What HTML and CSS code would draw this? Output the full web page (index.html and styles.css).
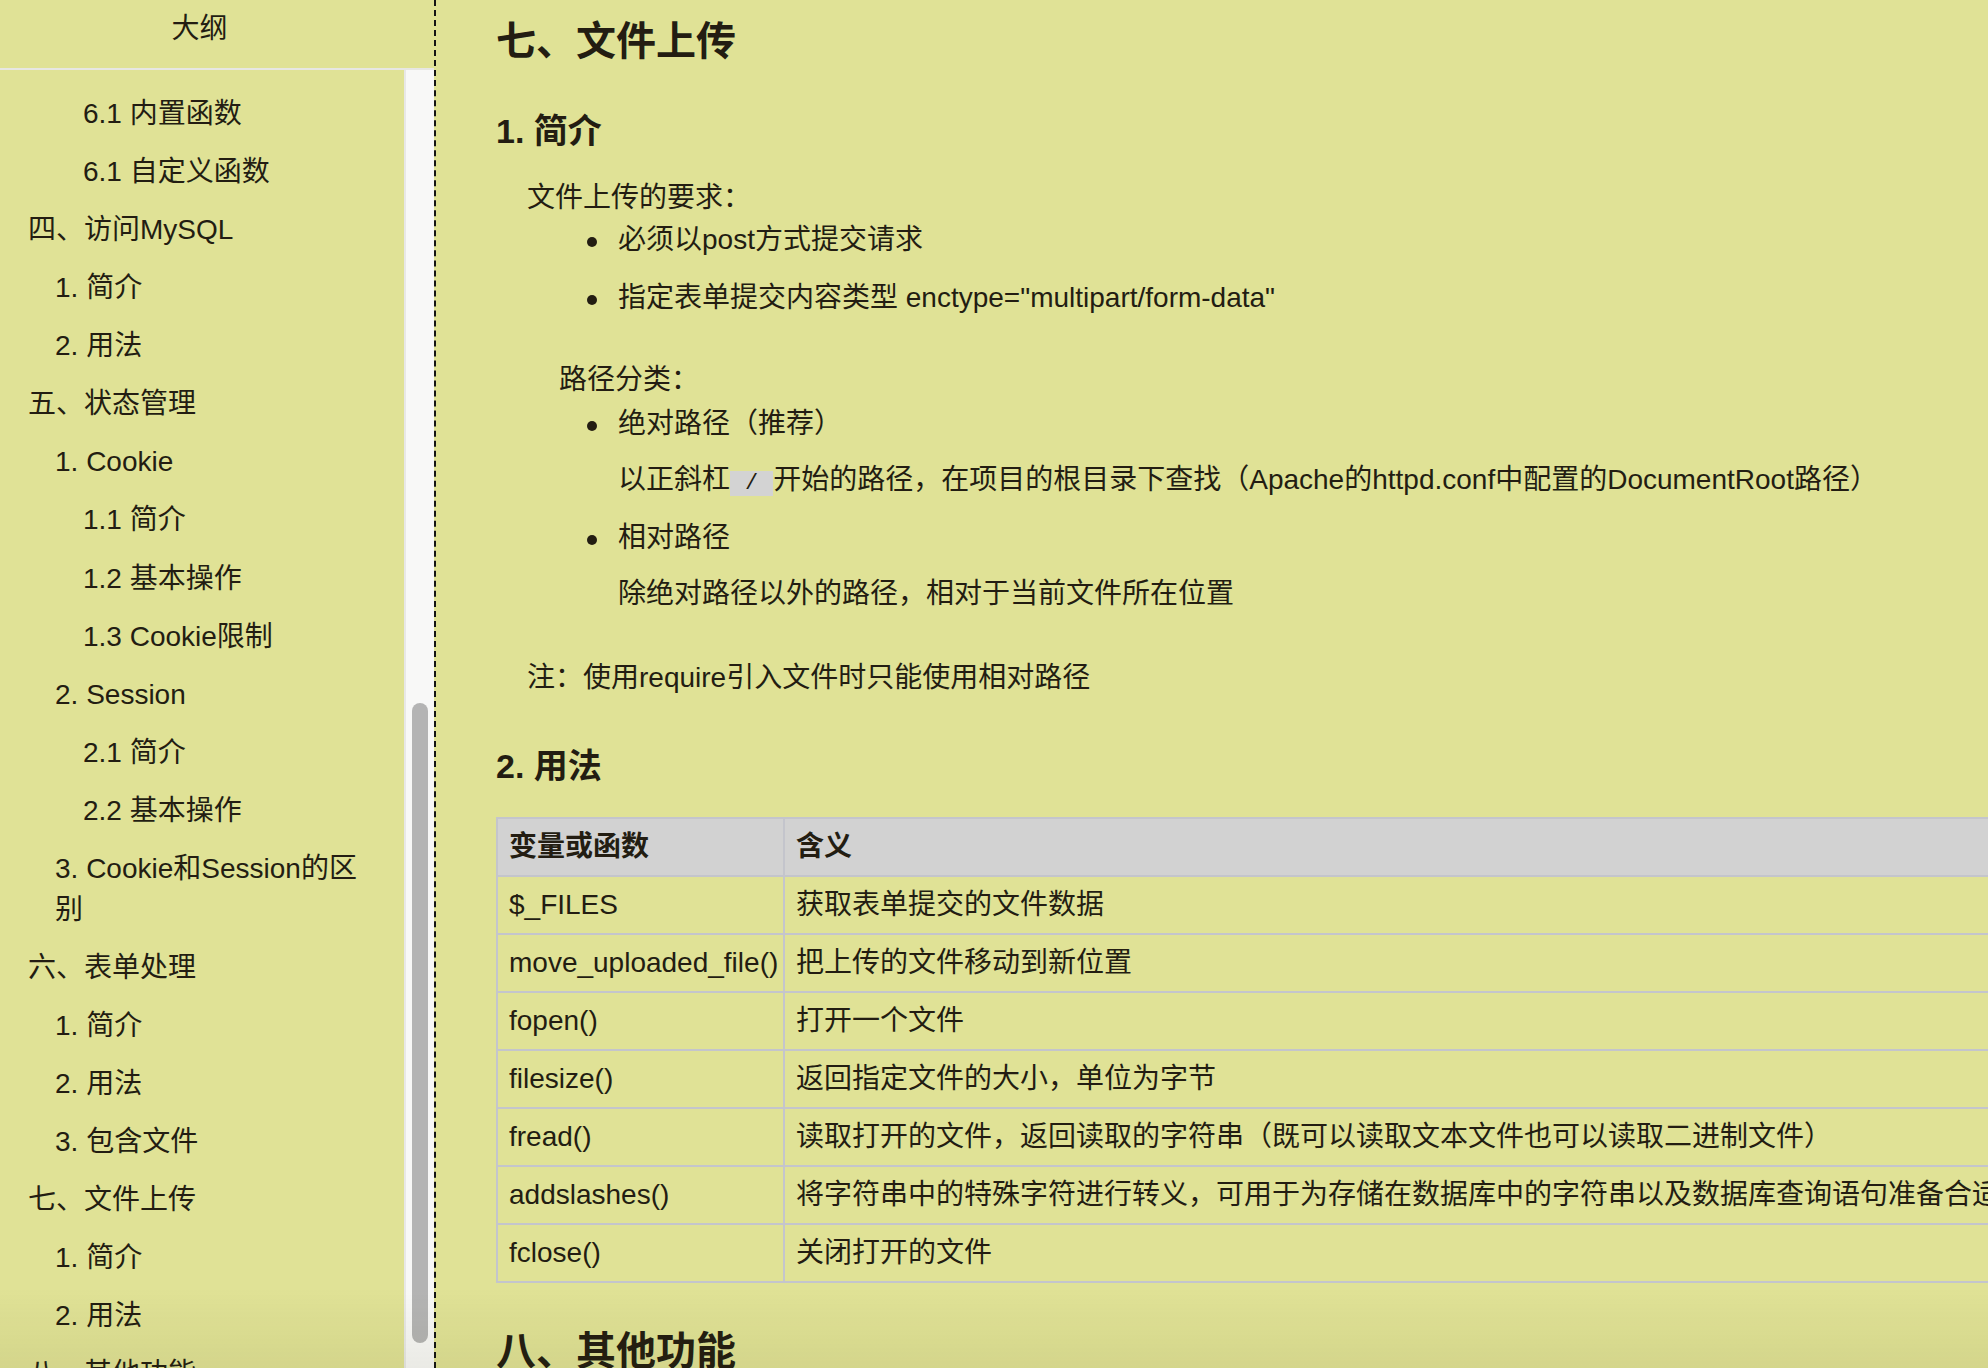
FILE: index.html
```html
<!DOCTYPE html>
<html lang="zh-CN">
<head>
<meta charset="utf-8">
<title>文件上传</title>
<link rel="stylesheet" href="styles.css">
</head>
<body>
<div class="app">
  <aside class="sidebar">
    <div class="outline-title">大纲</div>
    <div class="outline-body">
      <ul class="outline-list">
        <li class="outline-item lv3">6.1 内置函数</li>
        <li class="outline-item lv3">6.1 自定义函数</li>
        <li class="outline-item lv1">四、访问MySQL</li>
        <li class="outline-item lv2">1. 简介</li>
        <li class="outline-item lv2">2. 用法</li>
        <li class="outline-item lv1">五、状态管理</li>
        <li class="outline-item lv2">1. Cookie</li>
        <li class="outline-item lv3">1.1 简介</li>
        <li class="outline-item lv3">1.2 基本操作</li>
        <li class="outline-item lv3">1.3 Cookie限制</li>
        <li class="outline-item lv2">2. Session</li>
        <li class="outline-item lv3">2.1 简介</li>
        <li class="outline-item lv3">2.2 基本操作</li>
        <li class="outline-item lv2">3. Cookie和Session的区别</li>
        <li class="outline-item lv1">六、表单处理</li>
        <li class="outline-item lv2">1. 简介</li>
        <li class="outline-item lv2">2. 用法</li>
        <li class="outline-item lv2">3. 包含文件</li>
        <li class="outline-item lv1">七、文件上传</li>
        <li class="outline-item lv2">1. 简介</li>
        <li class="outline-item lv2">2. 用法</li>
        <li class="outline-item lv1">八、其他功能</li>
      </ul>
      <div class="scroll-track"><div class="scroll-thumb"></div></div>
    </div>
  </aside>
  <main class="doc">
    <h1 class="h1">七、文件上传</h1>
    <h2 class="h2">1. 简介</h2>
    <p class="lead">文件上传的要求：</p>
    <ul class="bullets">
      <li class="bullet">必须以post方式提交请求</li>
      <li class="bullet">指定表单提交内容类型 enctype="multipart/form-data"</li>
    </ul>
    <p class="lead lead-deep">路径分类：</p>
    <ul class="bullets bullets-paths">
      <li class="bullet">绝对路径（推荐）
        <p class="sub">以正斜杠<code class="code">/</code>开始的路径，在项目的根目录下查找（Apache的httpd.conf中配置的DocumentRoot路径）</p>
      </li>
      <li class="bullet">相对路径
        <p class="sub">除绝对路径以外的路径，相对于当前文件所在位置</p>
      </li>
    </ul>
    <p class="lead note">注：使用require引入文件时只能使用相对路径</p>
    <h2 class="h2 h2-usage">2. 用法</h2>
    <table class="table">
      <colgroup><col class="col-name"><col class="col-desc"></colgroup>
      <thead>
        <tr><th class="cell">变量或函数</th><th class="cell">含义</th></tr>
      </thead>
      <tbody>
        <tr><td class="cell">$_FILES</td><td class="cell">获取表单提交的文件数据</td></tr>
        <tr><td class="cell">move_uploaded_file()</td><td class="cell">把上传的文件移动到新位置</td></tr>
        <tr><td class="cell">fopen()</td><td class="cell">打开一个文件</td></tr>
        <tr><td class="cell">filesize()</td><td class="cell">返回指定文件的大小，单位为字节</td></tr>
        <tr><td class="cell">fread()</td><td class="cell">读取打开的文件，返回读取的字符串（既可以读取文本文件也可以读取二进制文件）</td></tr>
        <tr><td class="cell">addslashes()</td><td class="cell">将字符串中的特殊字符进行转义，可用于为存储在数据库中的字符串以及数据库查询语句准备合适的字符串</td></tr>
        <tr><td class="cell">fclose()</td><td class="cell">关闭打开的文件</td></tr>
      </tbody>
    </table>
    <h1 class="h1 h1-next">八、其他功能</h1>
  </main>
</div>
<div class="shade"></div>
</body>
</html>
```
FILE: styles.css
```css
* { box-sizing: border-box; }
html, body { margin: 0; padding: 0; }
body {
  background: #e0e296;
  color: #231d12;
  font-family: "Liberation Sans", "Noto Sans CJK SC", sans-serif;
  font-size: 28px;
  overflow: hidden;
  height: 1368px;
}
.app { display: flex; height: 1368px; overflow: hidden; }

/* sidebar */
.sidebar {
  width: 436px;
  flex: none;
  border-right: 2px dashed #141414;
  display: flex;
  flex-direction: column;
}
.outline-title {
  height: 70px;
  flex: none;
  border-bottom: 2px solid #e7e7e3;
  padding-right: 35px;
  text-align: center;
  line-height: 58px;
}
.outline-body { flex: 1; min-height: 0; display: flex; overflow: hidden; }
.outline-list {
  flex: 1;
  list-style: none;
  margin: 0;
  padding: 15px 32px 0 0;
}
.outline-item { line-height: 40.6px; padding: 8.75px 0; }
.lv1 { padding-left: 28px; }
.lv2 { padding-left: 55px; }
.lv3 { padding-left: 83px; }
.scroll-track {
  width: 30px;
  flex: none;
  background: #f8f8f7;
  border-left: 2px solid #e8e8e6;
  padding: 0 6px;
}
.scroll-thumb {
  margin-top: 633px;
  height: 640px;
  border-radius: 8px;
  background: #b4b4b4;
}

/* document */
.doc {
  flex: 1;
  min-width: 0;
  overflow: hidden;
  padding: 13px 0 0 60px;
}
.h1 { font-size: 40px; line-height: 56px; margin: 0; font-weight: 700; }
.h2 { font-size: 34px; line-height: 48px; margin: 38px 0 0; font-weight: 700; }
.lead { margin: 23px 0 0 31px; line-height: 40px; }
.lead-deep { margin-top: 42px; margin-left: 63px; }
.bullets { margin: 2px 0 0; padding-left: 122px; list-style: none; }
.bullets-paths { margin-top: 4px; }
.bullet { line-height: 40px; }
.bullet::before {
  content: "";
  display: inline-block;
  width: 10px;
  height: 10px;
  border-radius: 50%;
  background: currentColor;
  margin-left: -31px;
  margin-right: 21px;
  vertical-align: middle;
}
.bullet + .bullet { margin-top: 18px; }
.sub { margin: 16px 0 0; line-height: 40px; white-space: nowrap; }
.code {
  font-family: "Liberation Mono", monospace;
  font-size: 22px;
  line-height: 22px;
  background: #d3d3d3;
  padding: 0 15px;
}
.note { margin-top: 44px; }
.h2-usage { margin-top: 44px; }

.table {
  margin-top: 27px;
  border-collapse: collapse;
  table-layout: fixed;
  width: 1700px;
  white-space: nowrap;
}
.col-name { width: 287px; }
.col-desc { width: 1413px; }
.cell {
  border: 2px solid #c4c5cc;
  padding: 8px 11px;
  line-height: 40px;
  height: 58px;
  text-align: left;
  font-weight: 400;
}
th.cell { background: #d2d2d2; font-weight: 700; }
.h1-next { margin-top: 40px; }

.shade {
  position: fixed;
  left: 0;
  right: 0;
  bottom: 0;
  height: 80px;
  background: linear-gradient(rgba(60, 60, 0, 0), rgba(60, 60, 0, 0.07));
  pointer-events: none;
}
```
